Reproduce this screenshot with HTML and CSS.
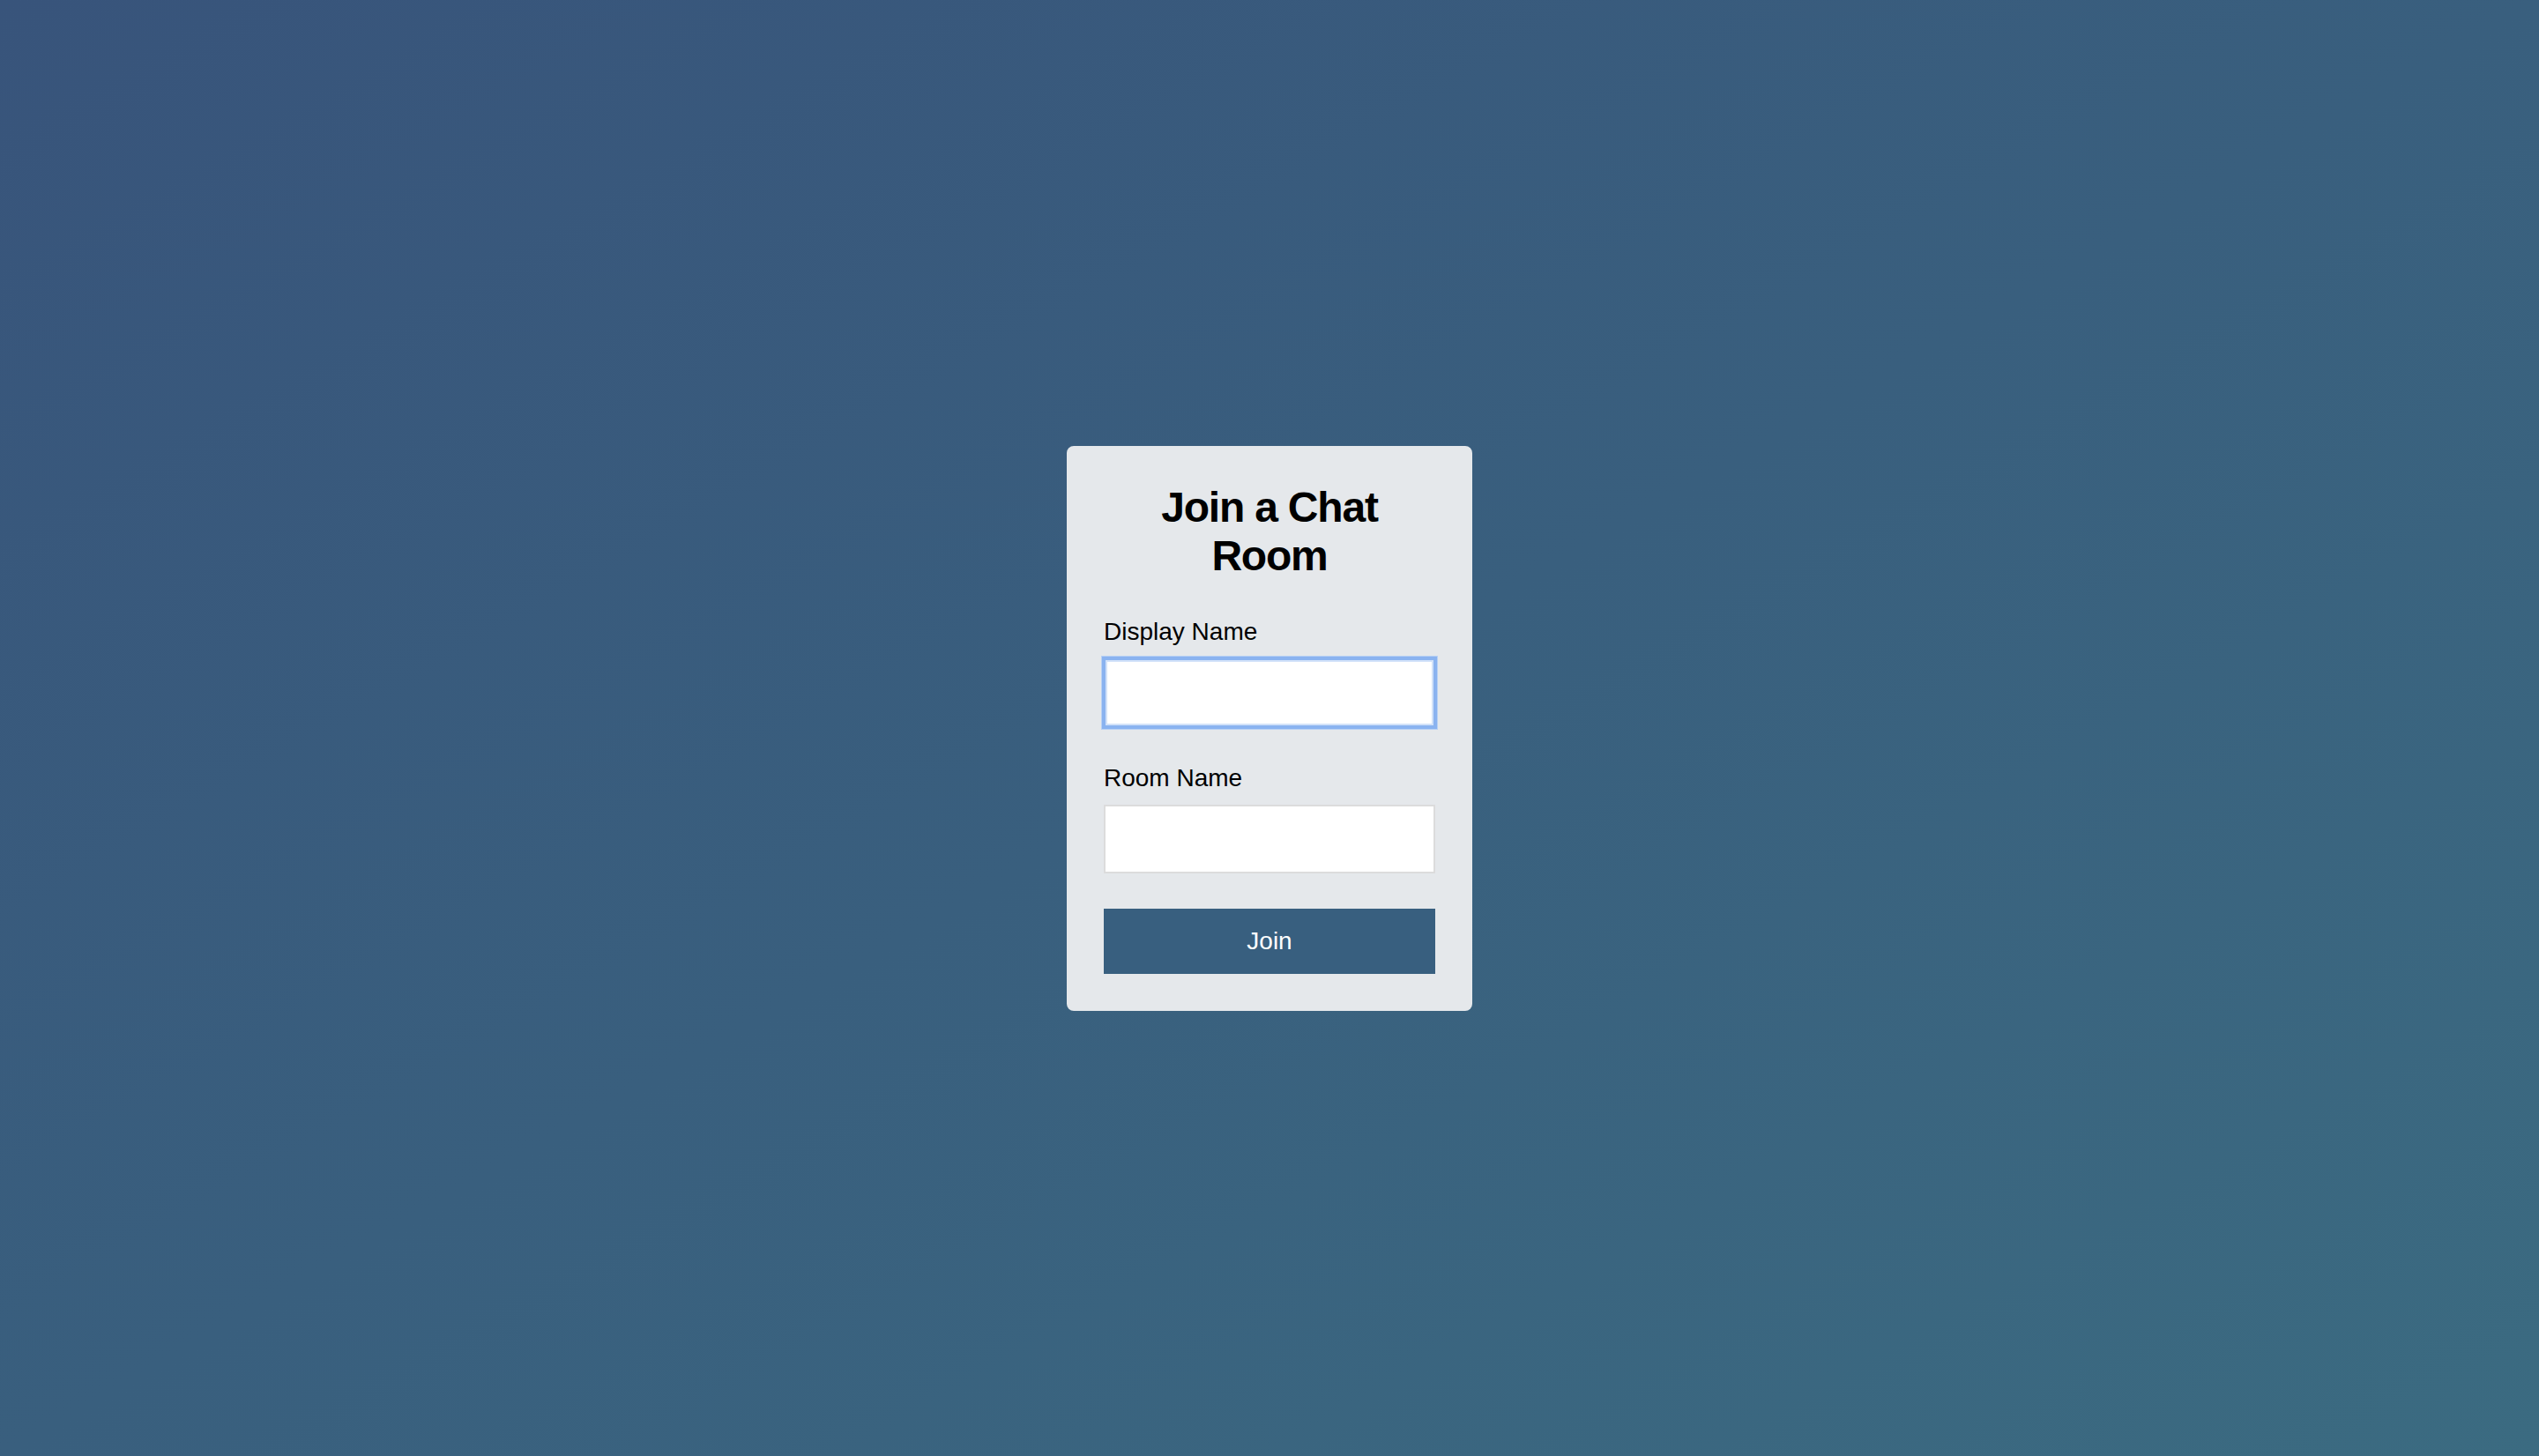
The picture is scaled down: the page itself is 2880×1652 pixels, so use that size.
FILE: index.html
```html
<!DOCTYPE html>
<html lang="en">
<head>
<meta charset="utf-8">
<title>Join a Chat Room</title>
<link rel="stylesheet" href="styles.css">
</head>
<body>
<main class="page">
  <form class="card">
    <h2 class="title">Join a Chat Room</h2>
    <label class="label" for="display">Display Name</label>
    <input class="field field-focus" id="display" type="text">
    <label class="label label-gap" for="room">Room Name</label>
    <input class="field" id="room" type="text">
    <button class="join" type="button">Join</button>
  </form>
</main>
</body>
</html>
```

FILE: styles.css
```css
html, body {
  margin: 0;
  padding: 0;
  height: 100%;
}

body {
  font-family: "Liberation Sans", Arial, Helvetica, sans-serif;
  background: linear-gradient(to bottom right, #38547b 0%, #395f7e 50%, #3b6b81 100%);
}

.page {
  height: 100vh;
  display: flex;
  align-items: center;
  justify-content: center;
}

.card {
  width: 460px;
  box-sizing: border-box;
  padding: 42px;
  background: #e5e8eb;
  border-radius: 8px;
  display: flex;
  flex-direction: column;
}

.title {
  margin: 0 0 43px;
  font-size: 48px;
  line-height: 55px;
  font-weight: 700;
  text-align: center;
  color: #000;
  letter-spacing: -1.2px;
}

.label {
  font-size: 28px;
  line-height: 32px;
  color: #000;
  margin-bottom: 14px;
}

.label-gap {
  margin-top: 42px;
}

.field {
  box-sizing: border-box;
  width: 100%;
  height: 78px;
  margin: 0;
  border: 2px solid #dcdcdc;
  background: #fff;
  font-size: 28px;
  padding: 0 10px;
  outline: none;
}

.field-focus {
  border-color: #8ab3f0;
  box-shadow: inset 0 0 0 2px #d2e2f9, 0 0 0 2px #8ab3f0, 0 0 0 3px #b8d0f4;
}

.join {
  margin-top: 40px;
  height: 74px;
  width: 100%;
  border: none;
  background: #385f7f;
  color: #fff;
  font-family: "Liberation Sans", Arial, Helvetica, sans-serif;
  font-size: 28px;
  cursor: pointer;
}
```
